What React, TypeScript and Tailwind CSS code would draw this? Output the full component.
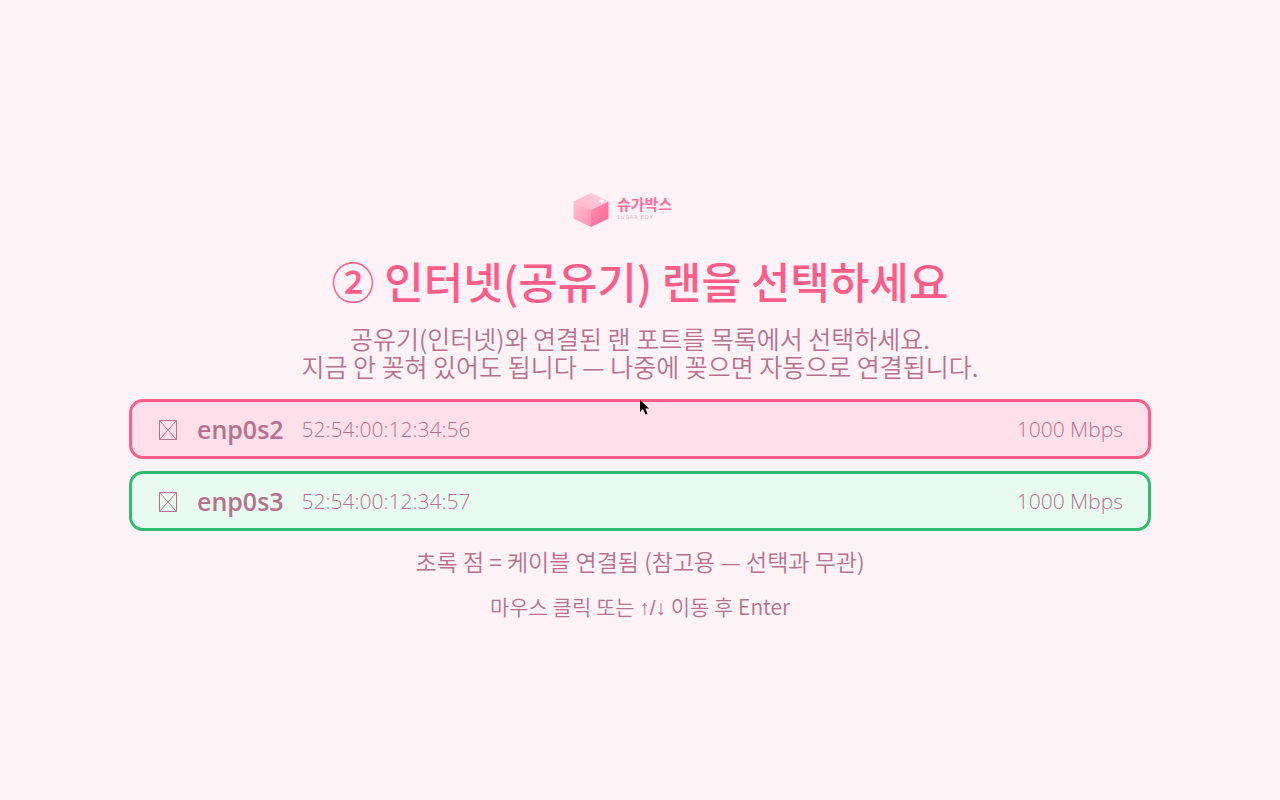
import { useState } from "react";
import clsx from "clsx";

const ports = [
  { name: "enp0s2", mac: "52:54:00:12:34:56", speed: "1000 Mbps" },
  { name: "enp0s3", mac: "52:54:00:12:34:57", speed: "1000 Mbps" },
];

const Logo = () => (
  <div className="flex items-center gap-2 h-16 w-[134px]">
    <svg viewBox="0 0 36 36" className="size-9 shrink-0" aria-hidden="true">
      <defs>
        <linearGradient id="cube-top" x1="0" y1="1" x2="1" y2="0">
          <stop offset="0" stopColor="#ffb3cb" />
          <stop offset="1" stopColor="#ffd0de" />
        </linearGradient>
        <linearGradient id="cube-left" x1="0" y1="0" x2="1" y2="1">
          <stop offset="0" stopColor="#ffc2d4" />
          <stop offset="1" stopColor="#ff8fb1" />
        </linearGradient>
        <linearGradient id="cube-right" x1="0" y1="0" x2="1" y2="1">
          <stop offset="0" stopColor="#ff8fb3" />
          <stop offset="1" stopColor="#ff6492" />
        </linearGradient>
      </defs>
      <path d="M18 1 35.5 9.5 18 18 .5 9.5Z" fill="url(#cube-top)" />
      <path d="M.5 9.5 18 18v17L.5 26.5Z" fill="url(#cube-left)" />
      <path d="M35.5 9.5 18 18v17l17.5-8.5Z" fill="url(#cube-right)" />
      <path
        d="M28.5 5.5 29.4 8.1 32 9l-2.6.9-.9 2.6-.9-2.6L25 9l2.6-.9Z"
        fill="#fff"
      />
    </svg>
    <div className="flex flex-col gap-0.5 pb-1 whitespace-nowrap">
      <span className="text-[15px] leading-4 font-bold text-[#ff6f9a]">
        슈가박스
      </span>
      <span className="text-[5px] leading-[6px] tracking-[1px] font-normal text-[#dba9bb] font-['Open_Sans',sans-serif]">
        SUGAR BOX
      </span>
    </div>
  </div>
);

const MissingGlyph = () => (
  <svg
    viewBox="0 0 18 20"
    className="w-[18px] h-5 shrink-0"
    fill="none"
    stroke="currentColor"
    strokeWidth="1"
    aria-hidden="true"
  >
    <path d="M.5.5h17v19H.5ZM.5.5l17 19M17.5.5l-17 19" />
  </svg>
);

const Pointer = () => (
  <svg
    viewBox="0 0 10 16"
    className="absolute left-1/2 top-1/2 w-2.5 h-4 pointer-events-none"
    aria-hidden="true"
  >
    <path d="M0 0v12l3-3 2.5 5.5 2-1L5.300 8.500H9Z" fill="#000" />
  </svg>
);

const App = () => {
  const [selected, setSelected] = useState("enp0s2");

  return (
    <main className="relative flex flex-col items-center justify-center min-h-screen bg-[#fff3f7] text-[#b5728c] font-[350] font-['Noto_Sans_CJK_KR',sans-serif]">
      <Logo />
      <h1 className="mt-2.5 text-[43px] leading-14 font-medium text-[#ff5c8a]">
        ② 인터넷(공유기) 랜을 선택하세요
      </h1>
      <p className="mt-4 text-[25px] leading-7 text-center">
        공유기(인터넷)와 연결된 랜 포트를 목록에서 선택하세요.
        <br />
        지금 안 꽂혀 있어도 됩니다 — 나중에 꽂으면 자동으로 연결됩니다.
      </p>
      <div className="flex flex-col gap-3 mt-[19px] w-4/5 px-px font-['Open_Sans','Noto_Sans_CJK_KR',sans-serif]">
        {ports.map((port) => (
          <button
            key={port.name}
            type="button"
            onClick={() => setSelected(port.name)}
            aria-pressed={selected === port.name}
            className={clsx(
              "flex items-center h-[60px] pt-0.5 px-[25px] border-3 rounded-[14px] text-[21px]",
              selected === port.name
                ? "border-[#ff5c8a] bg-[#ffe0ea]"
                : "border-[#2dbd6e] bg-[#e9fbf1]"
            )}
          >
            <span className="flex items-center w-10 pl-0.5">
              <MissingGlyph />
            </span>
            <span className="text-[25px] font-semibold">{port.name}</span>
            <span className="ml-[18px]">{port.mac}</span>
            <span className="ml-auto">{port.speed}</span>
          </button>
        ))}
      </div>
      <p className="mt-4 text-[23px] leading-7">
        초록 점 = 케이블 연결됨 (참고용 — 선택과 무관)
      </p>
      <p className="mt-4 text-[21px] leading-[30px]">
        마우스 클릭 또는{" "}
        <span className="font-['Liberation_Sans',sans-serif]">↑/↓</span> 이동 후
        Enter
      </p>
      <Pointer />
    </main>
  );
};

export default App;
